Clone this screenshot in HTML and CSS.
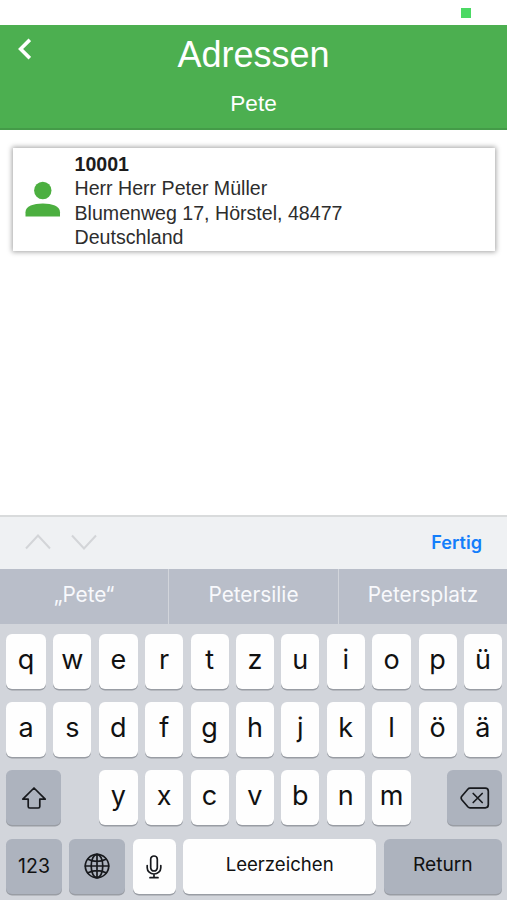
FILE: index.html
```html
<!DOCTYPE html>
<html lang="de">
<head>
<meta charset="utf-8">
<title>Adressen</title>
<link rel="stylesheet" href="styles.css">
</head>
<body>
<div class="statusbar"><span class="indicator"></span></div>
<header class="header">
  <svg class="back" viewBox="0 0 14 22"><path d="M12.800 1.800 3.600 11l9.200 9.200"/></svg>
  <h1 class="title">Adressen</h1>
  <div class="query">Pete</div>
</header>
<main class="results">
  <article class="card">
    <svg class="person" viewBox="0 0 36 36"><circle cx="17.8" cy="9.5" r="8.7"/><path d="M.5 35.500v-4.300C.5 25.300 8.500 22.600 17.800 22.600s17.200 2.700 17.200 8.600v4.300z"/></svg>
    <div class="details">
      <div class="number">10001</div>
      <div>Herr Herr Peter Müller</div>
      <div>Blumenweg 17, Hörstel, 48477</div>
      <div>Deutschland</div>
    </div>
  </article>
</main>
<section class="keyboard">
  <div class="toolbar">
    <svg class="arrow" viewBox="0 0 26 16"><path d="M1 14.500 13 1.500l12 13"/></svg>
    <svg class="arrow" viewBox="0 0 26 16"><path d="M1 1.500l12 13 12-13"/></svg>
    <span class="done">Fertig</span>
  </div>
  <div class="suggestions"><div>„Pete“</div><div>Petersilie</div><div>Petersplatz</div></div>
  <div class="keys">
    <div class="row letters"><b>q</b><b>w</b><b>e</b><b>r</b><b>t</b><b>z</b><b>u</b><b>i</b><b>o</b><b>p</b><b>ü</b></div>
    <div class="row letters"><b>a</b><b>s</b><b>d</b><b>f</b><b>g</b><b>h</b><b>j</b><b>k</b><b>l</b><b>ö</b><b>ä</b></div>
    <div class="row third">
      <b class="dark"><svg class="shift" viewBox="0 0 26 24"><path d="M13 2 1.800 13.200h5.400v7.300q0 1.500 1.500 1.500h8.600q1.500 0 1.500-1.500v-7.300h5.400z"/></svg></b>
      <b class="after-shift">y</b><b>x</b><b>c</b><b>v</b><b>b</b><b>n</b><b>m</b>
      <b class="dark delete-key"><svg class="delete" viewBox="0 0 30 22"><path d="M10 1.200h15.300q3 0 3 3v13.600q0 3-3 3H10q-1.300 0-2.200-1L1.800 12.700q-1.300-1.700 0-3.400L7.800 2.200q.9-1 2.200-1z"/><path d="m13.200 6.500 9 9m0-9-9 9"/></svg></b>
    </div>
    <div class="row fourth">
      <b class="dark word num">123</b>
      <b class="dark"><svg class="globe" viewBox="0 0 26 26"><circle cx="13" cy="13" r="11.700"/><ellipse cx="13" cy="13" rx="5.800" ry="11.700"/><path d="M13 1.300v23.400M1.300 13h23.400M4 6.200q9 4.200 18 0M4 19.800q9-4.200 18 0"/></svg></b>
      <b><svg class="mic" viewBox="0 0 16 24"><rect x="4.700" y="1" width="6.600" height="15" rx="3.300"/><path d="M1.200 10.500v2.200a6.800 6.300 0 0 0 13.600 0v-2.200M8 19v3.500M4 22.700h8"/></svg></b>
      <b class="word space">Leerzeichen</b>
      <b class="dark word return">Return</b>
    </div>
  </div>
</section>
</body>
</html>
```
FILE: styles.css
```css
* { box-sizing: border-box; }
body {
  margin: 0;
  height: 900px;
  display: flex;
  flex-direction: column;
  overflow: hidden;
  background: #fff;
  font-family: "Liberation Sans", Arial, sans-serif;
}
.statusbar {
  height: 25px;
  padding: 8px 36px 0 0;
  display: flex;
  justify-content: flex-end;
}
.indicator { width: 10px; height: 10px; background: #4bd964; }
.header {
  height: 105px;
  background: #4caf50;
  border-bottom: 2px solid #449b48;
  color: #fff;
  text-align: center;
  position: relative;
}
.back {
  position: absolute;
  left: 17px;
  top: 13px;
  width: 14px;
  height: 22px;
  fill: none;
  stroke: #fff;
  stroke-width: 3.6;
}
.title {
  margin: 0;
  padding-top: 9px;
  font-size: 36px;
  font-weight: 400;
  line-height: 42px;
}
.query { margin-top: 15px; font-size: 22.600px; line-height: 26px; }
.results { flex: 1; padding: 18px 12px 0 13px; }
.card {
  height: 103px;
  display: flex;
  background: #fff;
  box-shadow: 0 0 5px 1px rgba(0, 0, 0, .36);
}
.person { width: 36px; height: 36px; margin: 33px 13.500px 0 12px; fill: #4caf40; }
.details { padding-top: 4px; font-size: 19.600px; line-height: 24.400px; color: #2d2d2d; }
.number { font-weight: 700; color: #1c1c1c; }

.keyboard {
  height: 385px;
  background: #d2d5db;
  font-family: Inter, "Liberation Sans", sans-serif;
}
.toolbar {
  height: 54px;
  padding: 0 25px 2px;
  display: flex;
  align-items: center;
  gap: 20px;
  background: #eff1f3;
  border-top: 2px solid #d9dbdc;
}
.arrow { width: 26px; height: 16px; fill: none; stroke: #d3d5d8; stroke-width: 2; }
.done { margin-left: auto; font-size: 18.100px; font-weight: 600; color: #147efb; }
.suggestions {
  height: 55px;
  display: grid;
  grid-template-columns: 168px 170px 169px;
  background: #b9bec9;
  color: #f8f9fc;
  font-size: 20.800px;
  line-height: 51px;
  text-align: center;
}
.suggestions div + div { border-left: 1px solid #d2d5db; }
.keys { padding: 9.500px 5px 0 6px; display: grid; gap: 13.400px; }
.row { display: flex; gap: 7.400px; height: 55px; }
.row b {
  width: 38px;
  flex: none;
  height: 55px;
  padding-bottom: 4px;
  display: flex;
  align-items: center;
  justify-content: center;
  border-radius: 6px;
  background: #fefefe;
  box-shadow: 0 1.500px 0 #999da4;
  font-size: 27px;
  font-weight: 400;
  color: #111;
}
.letters b:first-child { width: 40px; }
.letters b:nth-child(3), .letters b:nth-child(9) { width: 39px; }
.row .dark { width: 55px; padding-bottom: 0; background: #adb3be; }
.third .after-shift { margin-left: 30.400px; width: 39px; }
.third b:nth-child(8) { width: 39px; }
.third .delete-key { margin-left: auto; }
.row .word { font-size: 18.600px; padding-bottom: 4px; }
.fourth .dark { width: 56px; }
.fourth b:nth-child(3) { width: 43px; padding: 0; }
.fourth .space { width: 193px; }
.row .return { width: auto; flex: 1; font-size: 19.200px; }
.row .num { padding-bottom: 0; font-size: 19.500px; }
.row svg { fill: none; stroke: #17191d; stroke-width: 1.700; stroke-linejoin: round; stroke-linecap: round; }
.shift { width: 26px; height: 24px; margin-top: 1px; }
.delete { width: 30px; height: 22px; }
.globe { width: 26px; height: 26px; }
.mic { width: 16px; height: 24px; margin-top: 1px; }
```
